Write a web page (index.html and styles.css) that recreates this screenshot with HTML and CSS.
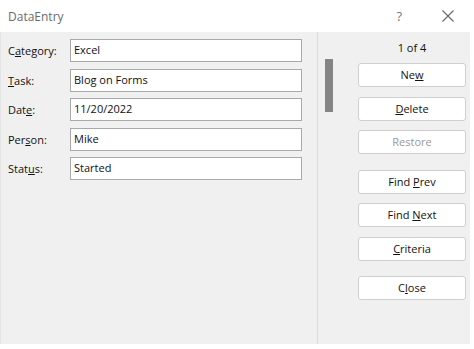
FILE: index.html
```html
<!DOCTYPE html>
<html>
<head>
<meta charset="utf-8">
<link rel="stylesheet" href="styles.css">
</head>
<body>
<div class="window">
  <div class="titlebar">
    <span class="title">DataEntry</span>
    <span class="help">?</span>
    <svg class="close-x" width="12" height="12" viewBox="0 0 12 12"><path d="M0.5 0.5 L11.5 11.5 M11.5 0.5 L0.5 11.5" stroke="#666" stroke-width="1.1" fill="none"/></svg>
  </div>
  <div class="panel">
    <div class="form">
      <label class="lbl">C<u>a</u>tegory:</label><div class="field">Excel</div>
      <label class="lbl"><u>T</u>ask:</label><div class="field">Blog on Forms</div>
      <label class="lbl">Dat<u>e</u>:</label><div class="field">11/20/2022</div>
      <label class="lbl">Per<u>s</u>on:</label><div class="field">Mike</div>
      <label class="lbl">Stat<u>u</u>s:</label><div class="field">Started</div>
    </div>
    <div class="scroll"><div class="thumb"></div></div>
    <div class="buttons">
      <div class="count">1 of 4</div>
      <div class="btn">Ne<u>w</u></div>
      <div class="btn"><u>D</u>elete</div>
      <div class="btn disabled">Restore</div>
      <div class="btn gap">Find <u>P</u>rev</div>
      <div class="btn">Find <u>N</u>ext</div>
      <div class="btn"><u>C</u>riteria</div>
      <div class="btn gap2">C<u>l</u>ose</div>
    </div>
  </div>
</div>
</body>
</html>
```
FILE: styles.css
```css
html, body {
  margin: 0;
  padding: 0;
  background: #ffffff;
  font-family: "Open Sans", "Noto Sans", sans-serif;
  font-size: 11px;
  color: #111111;
}
.window {
  width: 470px;
  height: 344px;
  display: flex;
  flex-direction: column;
}
.titlebar {
  height: 32px;
  background: #ffffff;
  display: flex;
  align-items: center;
  padding-left: 8px;
  box-sizing: border-box;
}
.title {
  font-size: 12px;
  color: #6b6b6b;
  flex: 1;
}
.help {
  font-size: 13px;
  color: #777;
  margin-right: 40px;
}
.close-x {
  margin-right: 16px;
}
.panel {
  flex: 1;
  background: #f0f0f0;
  display: flex;
  border-left: 1px solid #e4e4e4;
}
.form {
  width: 317px;
  box-sizing: border-box;
  padding: 7px 0 0 7px;
  display: grid;
  grid-template-columns: 62px 232px;
  grid-auto-rows: 23px;
  row-gap: 6.5px;
  align-content: start;
  align-items: center;
  border-right: 1px solid #dcdcdc;
}
.lbl {
  font-size: 11px;
}
.field {
  height: 23px;
  box-sizing: border-box;
  background: #fff;
  border: 1px solid #a9a9a9;
  padding: 0 0 0 3px;
  line-height: 20px;
  font-size: 11px;
}
.scroll {
  width: 40px;
  padding: 27px 0 0 7px;
  box-sizing: border-box;
}
.thumb {
  width: 8px;
  height: 53px;
  background: #858585;
}
.buttons {
  width: 108px;
  display: flex;
  flex-direction: column;
  padding-top: 8px;
}
.count {
  text-align: center;
  height: 16px;
  line-height: 16px;
  margin-bottom: 7px;
}
.btn {
  height: 24px;
  box-sizing: border-box;
  background: #fff;
  border: 1px solid #cfcfcf;
  border-radius: 3px;
  text-align: center;
  line-height: 22px;
  margin-bottom: 9.5px;
}
.btn.disabled {
  color: #9a9a9a;
}
.btn.gap {
  margin-top: 6px;
}
.btn.gap2 {
  margin-top: 6px;
}
```
